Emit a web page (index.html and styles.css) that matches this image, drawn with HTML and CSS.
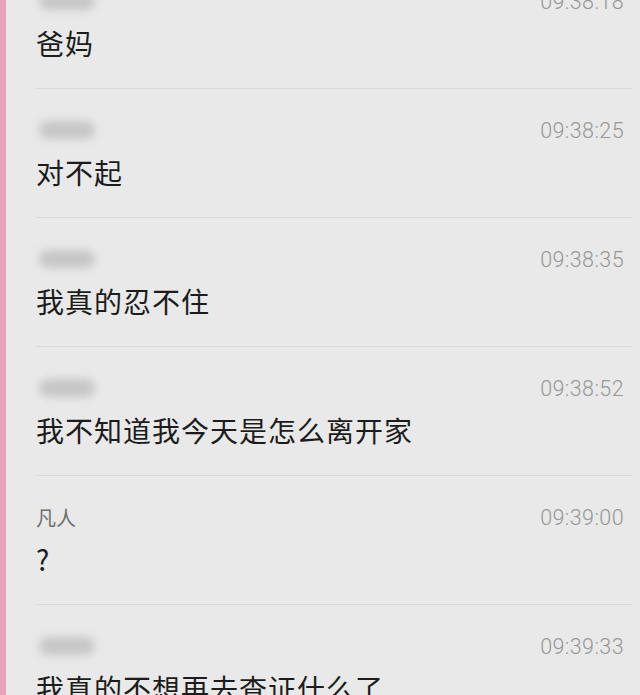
FILE: index.html
```html
<!DOCTYPE html>
<html lang="zh-CN">
<head>
    <meta charset="UTF-8">
    <meta name="viewport" content="width=device-width, initial-scale=1.0">
    <title>聊天记录</title>
    <link rel="stylesheet" href="styles.css">
</head>
<body>
    <div class="strip"></div>
    <div class="list">
        <div class="row">
            <div class="head"><span class="blur"></span><span class="time">09:38:18</span></div>
            <div class="msg">爸妈</div>
        </div>
        <div class="row">
            <div class="head"><span class="blur"></span><span class="time">09:38:25</span></div>
            <div class="msg">对不起</div>
        </div>
        <div class="row">
            <div class="head"><span class="blur"></span><span class="time">09:38:35</span></div>
            <div class="msg">我真的忍不住</div>
        </div>
        <div class="row">
            <div class="head"><span class="blur"></span><span class="time">09:38:52</span></div>
            <div class="msg">我不知道我今天是怎么离开家</div>
        </div>
        <div class="row">
            <div class="head"><span class="name">凡人</span><span class="time">09:39:00</span></div>
            <div class="msg">?</div>
        </div>
        <div class="row">
            <div class="head"><span class="blur"></span><span class="time">09:39:33</span></div>
            <div class="msg">我真的不想再去查证什么了</div>
        </div>
    </div>
</body>
</html>
```

FILE: styles.css
```css
*{
    margin: 0;
    padding: 0;
    box-sizing: border-box;
}
body{
    height: 695px;
    overflow: hidden;
    display: flex;
    background-color: #e9e9e9;
    font-family: "Noto Sans CJK SC", "Noto Sans", sans-serif;
}
.strip{
    width: 6px;
    flex-shrink: 0;
    background-color: #e8a2ba;
}
.list{
    flex: 1;
    margin-top: -40px;
}
.row{
    margin-left: 30px;
    margin-right: 8px;
    padding-top: 29px;
    padding-bottom: 27px;
    border-bottom: 1px solid #d9d9d9;
}
.head{
    height: 24px;
    display: flex;
    justify-content: space-between;
    align-items: center;
}
.blur{
    width: 56px;
    height: 18px;
    margin-left: 3px;
    border-radius: 9px;
    background-color: #c6c6c6;
    filter: blur(4px);
}
.name{
    font-size: 20px;
    color: #6e6e6e;
}
.time{
    font-family: Roboto, sans-serif;
    font-size: 21.5px;
    font-weight: 300;
    letter-spacing: 0.4px;
    color: #979797;
    margin-right: 8px;
}
.msg{
    margin-top: 12px;
    height: 36px;
    line-height: 36px;
    font-size: 28px;
    letter-spacing: 1px;
    color: #1c1c1c;
}
```
